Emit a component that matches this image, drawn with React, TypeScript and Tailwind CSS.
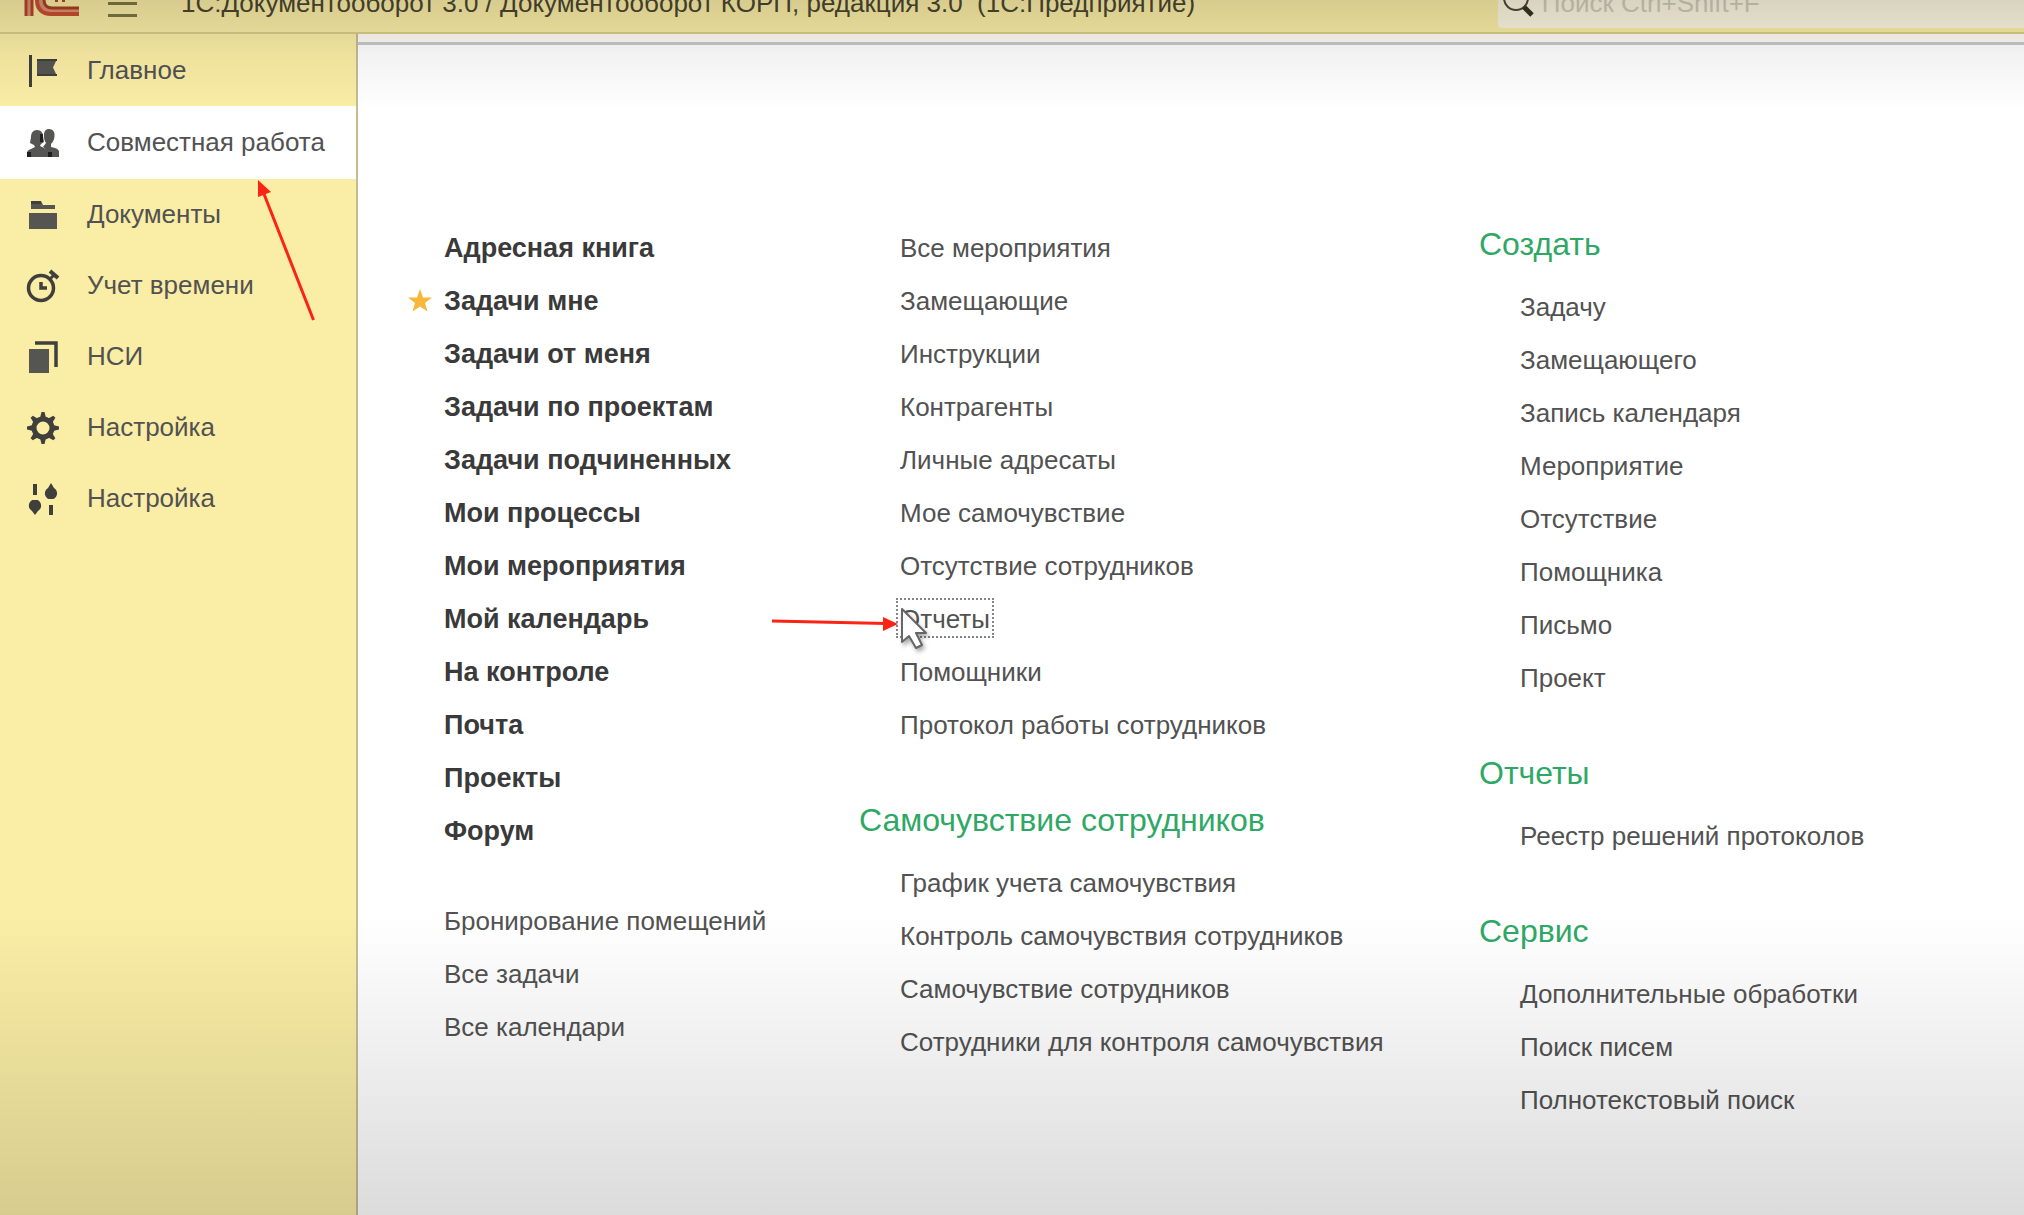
import type { ReactNode } from "react";

const DARK = "#3f3f3c";
const FILL = "#555551";

function FlagIcon() {
  return (
    <svg viewBox="0 0 36 36" className="size-9 shrink-0" aria-hidden="true">
      <path d="M4 2h3v32H4z" fill={DARK} />
      <path d="M12 6h20l-4 8.500 4 8.500H12z" fill={FILL} />
      <path d="M12 6h20v2H12zM12 21h20v2H12z" fill={DARK} />
    </svg>
  );
}

function PeopleIcon() {
  return (
    <svg viewBox="0 0 36 36" className="size-9 shrink-0" aria-hidden="true">
      <path d="M24 4c4 0 6 3 5.500 7-.3 4-1.500 6-3.500 8v3l4 1c3 1 4 2 4 4v5H23v-6l-5-4 3-4c-2-3-2-5-2-8 0-4 2-6 5-6z" fill={FILL} />
      <path d="M12 5c4 0 6 3 6 6l1 6-3 2-1 2 6 3c3 1 5 2 5 4v4H2v-4c0-2 1-3 4-4l4-2-1-2-4-2 1-6c0-4 2-7 6-7z" fill={FILL} />
      <path d="M2 27h4v5H2zM23 27h4v5h-4zM15 9h3v8h-3z" fill="#1f1f1f" />
    </svg>
  );
}

function FolderIcon() {
  return (
    <svg viewBox="0 0 36 36" className="size-9 shrink-0" aria-hidden="true">
      <path d="M6 4h10l2 4h12v4H6z" fill={FILL} />
      <path d="M6 4h10v3H6z" fill={DARK} />
      <path d="M4 16h28v16H4z" fill={FILL} />
    </svg>
  );
}

function ClockIcon() {
  return (
    <svg viewBox="0 0 36 36" className="size-9 shrink-0" fill="none" stroke={DARK} aria-hidden="true">
      <circle cx="16" cy="20" r="12.500" strokeWidth="3.500" />
      <path d="M16 14v6h6" strokeWidth="3.500" />
      <path d="M25 3l8 7" strokeWidth="4" />
      <path d="M29 7l-4 4" strokeWidth="3" />
    </svg>
  );
}

function CopyIcon() {
  return (
    <svg viewBox="0 0 36 36" className="size-9 shrink-0" aria-hidden="true">
      <path d="M10 4h21v24" fill="none" stroke={DARK} strokeWidth="3.500" />
      <path d="M4 10h20v24H4z" fill={FILL} />
    </svg>
  );
}

function GearIcon() {
  return (
    <svg viewBox="0 0 36 36" className="size-9 shrink-0" aria-hidden="true">
      <g fill={DARK}>
        {[0, 45, 90, 135, 180, 225, 270, 315].map((a) => (
          <path key={a} d="M15 8l1.500-6h3L21 8z" transform={`rotate(${a} 18 18)`} />
        ))}
      </g>
      <circle cx="18" cy="18" r="9" fill="none" stroke={DARK} strokeWidth="5" />
    </svg>
  );
}

function SlidersIcon() {
  return (
    <svg viewBox="0 0 36 36" className="size-9 shrink-0" fill={DARK} aria-hidden="true">
      <path d="M8 3h4v11H8zM24 24h4v10h-4z" />
      <path d="M26 2l3 5c6 4 2 11-1 11h-4c-3 0-7-7-1-11z" />
      <path d="M10 34l3-4c6-4 2-11-1-11H8c-3 0-7 7-1 11z" />
    </svg>
  );
}

function Logo() {
  return (
    <svg viewBox="0 0 56 17" className="h-[17px] w-14 shrink-0" fill="none" role="img" aria-label="1С">
      <path d="M5 0v16M17 0c0 7 4 11 10 11h28" stroke="#dd9070" strokeWidth="6" />
      <path d="M2 0v16M8 0v16" stroke="#b5442a" strokeWidth="3" />
      <path d="M13 0c0 9 5 14 14 14h28" stroke="#c8502f" strokeWidth="4" />
      <path d="M20 0c0 5 3 8 8 8h27" stroke="#a8401f" strokeWidth="3" />
      <path d="M31 1h3M38 1h3" stroke="#b5442a" strokeWidth="2" />
    </svg>
  );
}

const sections: { label: string; icon: ReactNode; active?: boolean }[] = [
  { label: "Главное", icon: <FlagIcon /> },
  { label: "Совместная работа", icon: <PeopleIcon />, active: true },
  { label: "Документы", icon: <FolderIcon /> },
  { label: "Учет времени", icon: <ClockIcon /> },
  { label: "НСИ", icon: <CopyIcon /> },
  { label: "Настройка", icon: <GearIcon /> },
  { label: "Настройка", icon: <SlidersIcon /> },
];

const primary = [
  "Адресная книга", "Задачи мне", "Задачи от меня", "Задачи по проектам", "Задачи подчиненных", "Мои процессы",
  "Мои мероприятия", "Мой календарь", "На контроле", "Почта", "Проекты", "Форум",
];
const rooms = ["Бронирование помещений", "Все задачи", "Все календари"];
const general = [
  "Все мероприятия", "Замещающие", "Инструкции", "Контрагенты", "Личные адресаты", "Мое самочувствие",
  "Отсутствие сотрудников", "Отчеты", "Помощники", "Протокол работы сотрудников",
];
const wellbeing = [
  "График учета самочувствия", "Контроль самочувствия сотрудников", "Самочувствие сотрудников",
  "Сотрудники для контроля самочувствия",
];
const create = ["Задачу", "Замещающего", "Запись календаря", "Мероприятие", "Отсутствие", "Помощника", "Письмо", "Проект"];
const reports = ["Реестр решений протоколов"];
const service = ["Дополнительные обработки", "Поиск писем", "Полнотекстовый поиск"];

function Star() {
  return (
    <svg viewBox="0 0 24 24" className="absolute -left-9 top-3.5 size-6" aria-hidden="true">
      <path d="M12 0l3 8.500h9l-7 5.500 2.500 8.500L12 17.500 4.500 22.500 7 14 0 8.500h9z" fill="#f6b73c" />
    </svg>
  );
}

function Pointer() {
  return (
    <>
      <svg viewBox="0 0 126 14" className="absolute -left-32 top-6 h-3.5 w-[126px]" aria-hidden="true">
        <path d="M0 4l114 2.500" stroke="#fb2414" strokeWidth="3" />
        <path d="M111 0l15 7-15 7z" fill="#fb2414" />
      </svg>
      <svg viewBox="0 0 34 50" className="absolute left-0 top-3.5 h-[50px] w-[34px] drop-shadow-[2px_3px_2px_#00000055]" aria-hidden="true">
        <path d="M2 2v33l7-6 7 12 6-3-6-12h10z" fill="#fff" stroke="#666" strokeWidth="2" strokeLinejoin="round" />
      </svg>
    </>
  );
}

function LinkList({ items, bold, starred, focused }: { items: string[]; bold?: boolean; starred?: string; focused?: string }) {
  return (
    <ul className="pl-[41px]">
      {items.map((t) => (
        <li key={t} className="relative flex h-[53px] items-center">
          {t === starred && <Star />}
          <a
            href="#"
            className={
              t === focused
                ? "-ml-1 mb-1 flex h-10 items-center border-2 border-dotted border-[#858585] px-0.5 pt-1 text-[26px]"
                : bold
                  ? "text-[27px] font-bold text-[#3a3a3a]"
                  : "text-[26px]"
            }
          >
            {t}
          </a>
          {t === focused && <Pointer />}
        </li>
      ))}
    </ul>
  );
}

function Group({ title, items }: { title: string; items: string[] }) {
  return (
    <section>
      <h2 className="mb-[11px] flex h-[53px] items-center text-[32px] text-[#2fa866]">{title}</h2>
      <LinkList items={items} />
    </section>
  );
}

export default function App() {
  return (
    <div className="relative flex min-h-screen flex-col bg-white font-['Liberation_Sans',Arial,sans-serif] text-[#525252]">
      <header className="flex h-[34px] items-end overflow-hidden border-b-2 border-[#d9cd88] bg-[#faeda5]">
        <div className="flex w-[181px] shrink-0 items-end gap-7 self-start pl-6">
          <Logo />
          <button type="button" aria-label="Меню" className="h-[15px] w-[29px] border-y-[3px] border-[#7d7842]" />
        </div>
        <h1 className="whitespace-pre pb-[13px] text-[26px] leading-8 text-[#4a4630]">
          {"1С:Документооборот 3.0 / Документооборот КОРП, редакция 3.0  (1С:Предприятие)"}
        </h1>
        <label className="mb-1 ml-auto flex h-[50px] w-[26%] items-center gap-2 rounded-l bg-[#fbf6de] pl-1">
          <svg viewBox="0 0 32 32" className="size-8 shrink-0" fill="none" aria-hidden="true">
            <circle cx="14" cy="11" r="12" stroke="#4a4838" strokeWidth="2" />
            <path d="M22 20l8 8" stroke="#35331f" strokeWidth="5" />
          </svg>
          <input
            type="search"
            aria-label="Поиск"
            placeholder="Поиск Ctrl+Shift+F"
            className="w-full bg-transparent text-[26px] leading-8 outline-none placeholder:text-[#cfcab8]"
          />
        </label>
      </header>

      <div className="flex grow">
        <nav className="w-[358px] shrink-0 border-r-2 border-[#c3bb98] bg-[#faeda5] pt-px">
          {sections.map((s, i) => (
            <a
              key={i}
              href="#"
              className={
                s.active
                  ? "relative flex h-[73px] items-center gap-[26px] bg-white pl-[25px] text-[26px]"
                  : "flex h-[71px] items-center gap-[26px] pl-[25px] text-[26px]"
              }
            >
              {s.icon}
              <span className="whitespace-nowrap">{s.label}</span>
              {s.active && (
                <svg viewBox="0 0 60 144" className="absolute left-64 top-[74px] z-10 h-36 w-[60px]" aria-hidden="true">
                  <path d="M57.500 140L8 14" stroke="#fb2414" strokeWidth="3" />
                  <path d="M2 0l13 12L2 17z" fill="#fb2414" />
                </svg>
              )}
            </a>
          ))}
        </nav>

        <main className="min-w-0 grow">
          <div className="h-[11px] border-b-[3px] border-[#c8c8c8] bg-[#fdfdf5]" />
          <div className="grid grid-cols-[456px_620px_1fr] whitespace-nowrap pl-[45px] pt-[172px]">
            <div className="flex flex-col gap-[37px] pt-[5px]">
              <LinkList items={primary} bold starred="Задачи мне" />
              <LinkList items={rooms} />
            </div>
            <div className="flex flex-col gap-[41px] pt-[5px]">
              <LinkList items={general} focused="Отчеты" />
              <Group title="Самочувствие сотрудников" items={wellbeing} />
            </div>
            <div className="flex flex-col gap-[41px]">
              <Group title="Создать" items={create} />
              <Group title="Отчеты" items={reports} />
              <Group title="Сервис" items={service} />
            </div>
          </div>
        </main>
      </div>

      <div className="pointer-events-none absolute inset-x-0 top-0 z-20 h-[110px] bg-linear-to-b from-black/14 via-black/5 to-transparent" />
      <div className="pointer-events-none absolute inset-x-0 bottom-0 z-20 h-[300px] bg-linear-to-t from-black/14 to-transparent" />
    </div>
  );
}
